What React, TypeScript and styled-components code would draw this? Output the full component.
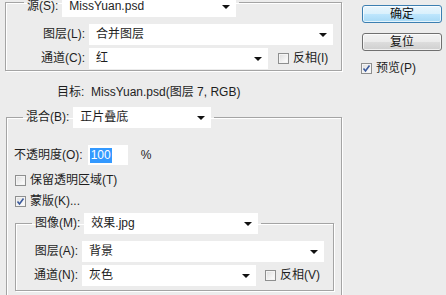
import React from 'react'
import styled, { createGlobalStyle } from 'styled-components'

const GlobalStyle = createGlobalStyle`
  html, body {
    margin: 0;
    padding: 0;
    background: #ececec;
    overflow: hidden;
  }
  body {
    font-family: "Liberation Sans", "Noto Sans CJK SC", sans-serif;
    font-size: 12px;
    line-height: 15px;
    color: #1e1e1e;
  }
`

const Dialog = styled('div')`
  display: flex;
  align-items: flex-start;
  gap: 20px;
  padding-left: 5px;
  margin-top: -4px;
  width: 446px;
  height: 299px;
  box-sizing: border-box;
`

const LeftColumn = styled('div')`
  display: flex;
  flex-direction: column;
  width: 337px;
`

interface IGroup { shift?: number, pad?: string }
const Group = styled('fieldset')<IGroup>`
  margin: 0 0 0 ${(p) => p.shift || 0}px;
  padding: ${(p) => p.pad || '0 7px 0 7px'};
  border: 1px solid #a4a4a4;
  box-shadow: inset 1px 1px 0 #fff, 1px 1px 0 #fff;
  min-inline-size: 0;
  display: flex;
  flex-direction: column;
`

interface ILegend { indent: number, boxHeight?: number }
const Legend = styled('legend')<ILegend>`
  display: flex;
  align-items: flex-start;
  gap: 4px;
  padding: 0 3px;
  margin-left: ${(p) => p.indent}px;
  height: ${(p) => p.boxHeight || 21}px;
  overflow: visible;
`

const LegendLabel = styled('span')`
  line-height: 21px;
  white-space: nowrap;
`

const Rows = styled('div')`
  display: flex;
  flex-direction: column;
  gap: 3px;
`

const Row = styled('div')`
  display: flex;
  align-items: center;
  gap: 4px;
`

interface ILabel { width?: number }
const Label = styled('span')<ILabel>`
  width: ${(p) => (p.width ? `${p.width}px` : 'auto')};
  text-align: right;
  white-space: nowrap;
`

interface ISelect { width: number }
const SelectBox = styled('div')<ISelect>`
  width: ${(p) => p.width}px;
  height: 21px;
  flex: none;
  box-sizing: border-box;
  background: #fff;
  display: flex;
  align-items: center;
  justify-content: space-between;
  padding: 0 6px 0 7px;
  white-space: nowrap;
`

const Arrow = styled('span')`
  width: 0;
  height: 0;
  border-left: 4px solid transparent;
  border-right: 4px solid transparent;
  border-top: 4px solid #111;
  margin-top: 1px;
`

const Select = ({ width, value }: { width: number, value: string }) => (
  <SelectBox width={width}>
    <span>{value}</span>
    <Arrow />
  </SelectBox>
)

interface ICheck { lead?: number }
const CheckRow = styled('label')<ICheck>`
  display: flex;
  align-items: center;
  gap: 4px;
  margin-left: ${(p) => p.lead || 0}px;
  white-space: nowrap;
`

const Box = styled('span')`
  width: 11px;
  height: 11px;
  box-sizing: border-box;
  border: 1px solid #8e8f8f;
  background: linear-gradient(135deg, #dcdcdc, #f6f6f6 70%, #fff);
  display: flex;
  align-items: center;
  justify-content: center;
  box-shadow: inset 0 0 0 1px #f4f4f4;
`

const Check = ({ checked, text, lead }: { checked?: boolean, text: string, lead?: number }) => (
  <CheckRow lead={lead}>
    <Box>
      {checked && (
        <svg width="9" height="9" viewBox="0 0 9 9">
          <path d="M1.5 4.5 L3.5 7 L7.5 1.5" fill="none" stroke="#3b5a9c" strokeWidth="1.6" />
        </svg>
      )}
    </Box>
    <span>{text}</span>
  </CheckRow>
)

const TargetLine = styled('div')`
  margin: 14px 0 7px 52px;
  white-space: nowrap;
`

const OpacityRow = styled('div')`
  display: flex;
  align-items: center;
  margin: 17px 0 8px -1px;
`

const NumberInput = styled('div')`
  width: 40px;
  height: 20px;
  background: #fff;
  margin-left: 5px;
  display: flex;
  align-items: center;
  padding-left: 2px;
  box-sizing: border-box;
`

const Selected = styled('span')`
  background: #3399ff;
  color: #fff;
  padding: 0 1px;
`

const Percent = styled('span')`
  margin-left: 13px;
`

const Options = styled('div')`
  display: flex;
  flex-direction: column;
  gap: 6px;
  margin-bottom: 4px;
`

const Side = styled('div')`
  display: flex;
  flex-direction: column;
  padding-top: 9px;
  width: 80px;
`

interface IButton { primary?: boolean }
const Button = styled('button')<IButton>`
  width: 80px;
  height: 18px;
  padding: 0;
  font: inherit;
  line-height: 14px;
  color: #111;
  border-radius: 3px;
  border: 1px solid ${(p) => (p.primary ? '#3c7fb1' : '#707070')};
  background: ${(p) => (p.primary
    ? 'linear-gradient(#eaf6fd, #d9f0fc 50%, #bee6fd 50%, #a7d9f5)'
    : 'linear-gradient(#f2f2f2, #ebebeb 50%, #dddddd 50%, #cfcfcf)')};
  box-shadow: inset 0 0 0 1px rgba(255, 255, 255, 0.7);
  margin-bottom: 10px;
`

export default function App() {
  return (
    <>
      <GlobalStyle />
      <Dialog>
        <LeftColumn>
          <Group pad="0 7px 1px 8px">
            <Legend indent={10} boxHeight={12}>
              <LegendLabel>源(S):</LegendLabel>
              <Select width={174} value="MissYuan.psd" />
            </Legend>
            <Rows style={{ marginTop: 16 }}>
              <Row>
                <Label width={71}>图层(L):</Label>
                <Select width={244} value="合并图层" />
              </Row>
              <Row>
                <Label width={71}>通道(C):</Label>
                <Select width={179} value="红" />
                <Check text="反相(I)" lead={6} />
              </Row>
            </Rows>
          </Group>

          <TargetLine>目标:&nbsp; MissYuan.psd(图层 7, RGB)</TargetLine>

          <Group shift={1} pad="0 7px 12px 8px">
            <Legend indent={8}>
              <LegendLabel>混合(B):</LegendLabel>
              <Select width={138} value="正片叠底" />
            </Legend>
            <OpacityRow>
              <Label>不透明度(O):</Label>
              <NumberInput>
                <Selected>100</Selected>
              </NumberInput>
              <Percent>%</Percent>
            </OpacityRow>
            <Options>
              <Check text="保留透明区域(T)" />
              <Check checked text="蒙版(K)..." />
            </Options>
            <Group pad="0 7px 4px 7px">
              <Legend indent={9}>
                <LegendLabel>图像(M):</LegendLabel>
                <Select width={174} value="效果.jpg" />
              </Legend>
              <Rows style={{ marginTop: 7 }}>
                <Row>
                  <Label width={55}>图层(A):</Label>
                  <Select width={242} value="背景" />
                </Row>
                <Row>
                  <Label width={55}>通道(N):</Label>
                  <Select width={174} value="灰色" />
                  <Check text="反相(V)" lead={5} />
                </Row>
              </Rows>
            </Group>
          </Group>
        </LeftColumn>

        <Side>
          <Button primary>确定</Button>
          <Button>复位</Button>
          <Check checked text="预览(P)" lead={-1} />
        </Side>
      </Dialog>
    </>
  )
}
